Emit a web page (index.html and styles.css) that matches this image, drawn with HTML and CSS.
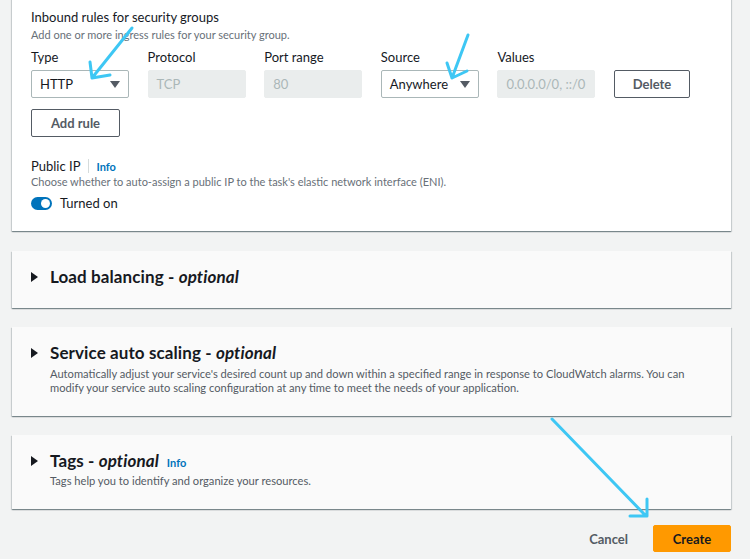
FILE: index.html
```html
<!DOCTYPE html>
<html>
<head>
<meta charset="utf-8">
<link rel="stylesheet" href="styles.css">
</head>
<body>
<div class="page">
  <section class="card card-first">
    <h3 class="field-title">Inbound rules for security groups</h3>
    <p class="hint">Add one or more ingress rules for your security group.</p>
    <div class="rules">
      <div class="col">
        <label class="lbl">Type</label>
        <div class="select"><span>HTTP</span><span class="caret"></span></div>
      </div>
      <div class="col">
        <label class="lbl">Protocol</label>
        <div class="input disabled">TCP</div>
      </div>
      <div class="col">
        <label class="lbl">Port range</label>
        <div class="input disabled">80</div>
      </div>
      <div class="col">
        <label class="lbl">Source</label>
        <div class="select"><span>Anywhere</span><span class="caret"></span></div>
      </div>
      <div class="col">
        <label class="lbl">Values</label>
        <div class="input disabled">0.0.0.0/0, ::/0</div>
      </div>
      <div class="col col-btn">
        <button class="btn btn-delete">Delete</button>
      </div>
    </div>
    <button class="btn btn-add">Add rule</button>
    <div class="field-head">
      <span class="lbl-inline">Public IP</span>
      <span class="sep"></span>
      <a class="info">Info</a>
    </div>
    <p class="hint hint-tight">Choose whether to auto-assign a public IP to the task's elastic network interface (ENI).</p>
    <div class="toggle-row">
      <span class="toggle"><span class="knob"></span></span>
      <span class="toggle-text">Turned on</span>
    </div>
  </section>

  <section class="card card-section">
    <div class="sec-head"><span class="tri"></span><h2 class="sec-title">Load balancing - <em>optional</em></h2></div>
  </section>

  <section class="card card-section">
    <div class="sec-head"><span class="tri"></span><h2 class="sec-title">Service auto scaling - <em>optional</em></h2></div>
    <p class="sec-desc">Automatically adjust your service's desired count up and down within a specified range in response to CloudWatch alarms. You can modify your service auto scaling configuration at any time to meet the needs of your application.</p>
  </section>

  <section class="card card-section card-last">
    <div class="sec-head"><span class="tri"></span><h2 class="sec-title">Tags - <em>optional</em></h2><a class="info info-sec">Info</a></div>
    <p class="sec-desc">Tags help you to identify and organize your resources.</p>
  </section>

  <div class="footer">
    <button class="btn-link">Cancel</button>
    <button class="btn-primary">Create</button>
  </div>
</div>

<svg class="arrows" width="750" height="559" viewBox="0 0 750 559">
  <g fill="none" stroke="#3ec7f4" stroke-width="3" stroke-linecap="round" stroke-linejoin="round">
    <path d="M132 28 L92 78 M90 62 L92 78 L110 75"/>
    <path d="M468 35 L452 78 M447 63 L452 78 L467 71"/>
    <path d="M552 419 L646 516 M647 499 L647 516 L630 516"/>
  </g>
</svg>
</body>
</html>
```

FILE: styles.css
```css
* { box-sizing: border-box; }

html, body {
  margin: 0;
  padding: 0;
  background: #f2f3f3;
  font-family: Lato, "Open Sans", Arial, sans-serif;
  color: #16191f;
  overflow: hidden;
}

.page {
  position: relative;
  width: 750px;
  height: 559px;
  padding: 0 19px 0 12px;
  display: flex;
  flex-direction: column;
  gap: 20px;
}

.card {
  background: #fafafa;
  box-shadow: 0 1px 1px 0 rgba(0, 28, 36, 0.35), 1px 1px 1px 0 rgba(0, 28, 36, 0.12), -1px 1px 1px 0 rgba(0, 28, 36, 0.12);
}

.card-first {
  background: #ffffff;
  margin-top: -10px;
  padding: 19px 19px 20px 19px;
}

.field-title {
  margin: 0;
  font-size: 13px;
  line-height: 16px;
  font-weight: 400;
}

.hint {
  margin: 3px 0 0 0;
  font-size: 11px;
  line-height: 14px;
  color: #687078;
}

.hint-tight { margin-top: 1px; }

.rules {
  display: flex;
  gap: 18.6px;
  margin-top: 7px;
}

.col {
  display: flex;
  flex-direction: column;
  gap: 5px;
  width: 98px;
}

.col-btn {
  justify-content: flex-end;
  width: 76px;
}

.lbl {
  font-size: 13px;
  line-height: 16px;
}

.select, .input {
  height: 28px;
  border: 1px solid #aab7b8;
  border-radius: 2px;
  padding: 0 8px;
  font-size: 13px;
  display: flex;
  align-items: center;
  justify-content: space-between;
  background: #fff;
}

.caret {
  width: 0;
  height: 0;
  border-left: 5px solid transparent;
  border-right: 5px solid transparent;
  border-top: 7px solid #545b64;
}

.input.disabled {
  background: #eaeded;
  border-color: #eaeded;
  color: #aab7b8;
}

.btn {
  font-family: inherit;
  height: 28px;
  background: #fff;
  border: 1px solid #545b64;
  border-radius: 2px;
  color: #545b64;
  font-weight: 700;
  font-size: 13px;
  padding: 0;
}

.btn-delete { width: 76px; }

.btn-add {
  width: 89px;
  margin-top: 11px;
  display: block;
}

.field-head {
  margin-top: 21px;
  display: flex;
  align-items: center;
  height: 16px;
}

.lbl-inline {
  font-size: 13px;
  line-height: 16px;
}

.sep {
  width: 1px;
  height: 14px;
  background: #d5dbdb;
  margin: 0 7px 0 8px;
}

.info {
  color: #0073bb;
  font-weight: 700;
  font-size: 11px;
}

.toggle-row {
  margin-top: 6px;
  display: flex;
  align-items: center;
  height: 16px;
  gap: 8px;
}

.toggle {
  width: 21px;
  height: 13px;
  border-radius: 7px;
  background: #0073bb;
  display: flex;
  align-items: center;
  justify-content: flex-end;
  padding: 0 2px;
}

.knob {
  width: 9px;
  height: 9px;
  border-radius: 50%;
  background: #fff;
}

.toggle-text {
  font-size: 13px;
}

.card-section {
  padding: 16px 19px 21px 19px;
}

.card-section + .card-section { margin-top: -1px; }

.sec-head {
  display: flex;
  align-items: center;
  height: 20px;
}

.tri {
  width: 0;
  height: 0;
  border-top: 5px solid transparent;
  border-bottom: 5px solid transparent;
  border-left: 7px solid #16191f;
  margin-right: 12px;
}

.sec-title {
  margin: 0;
  font-size: 17px;
  font-weight: 700;
  line-height: 20px;
  letter-spacing: 0.1px;
}

.sec-title em {
  font-style: italic;
}

.info-sec {
  margin-left: 8px;
  margin-top: 2px;
}

.sec-desc {
  margin: 4px 0 0 19px;
  font-size: 11.15px;
  line-height: 14px;
  color: #545b64;
}

.card-last .sec-desc { margin-top: 3px; }

.footer {
  margin-top: -4px;
  display: flex;
  justify-content: flex-end;
  align-items: center;
  gap: 25px;
}

.btn-link {
  font-family: inherit;
  background: none;
  border: none;
  color: #545b64;
  font-weight: 700;
  font-size: 13px;
  padding: 0;
}

.btn-primary {
  font-family: inherit;
  width: 78px;
  height: 27px;
  background: #ff9900;
  border: 1px solid #ff9900;
  border-radius: 2px;
  color: #16191f;
  font-weight: 700;
  font-size: 13px;
  padding: 0;
}

.arrows {
  position: absolute;
  left: 0;
  top: 0;
  pointer-events: none;
}
```
